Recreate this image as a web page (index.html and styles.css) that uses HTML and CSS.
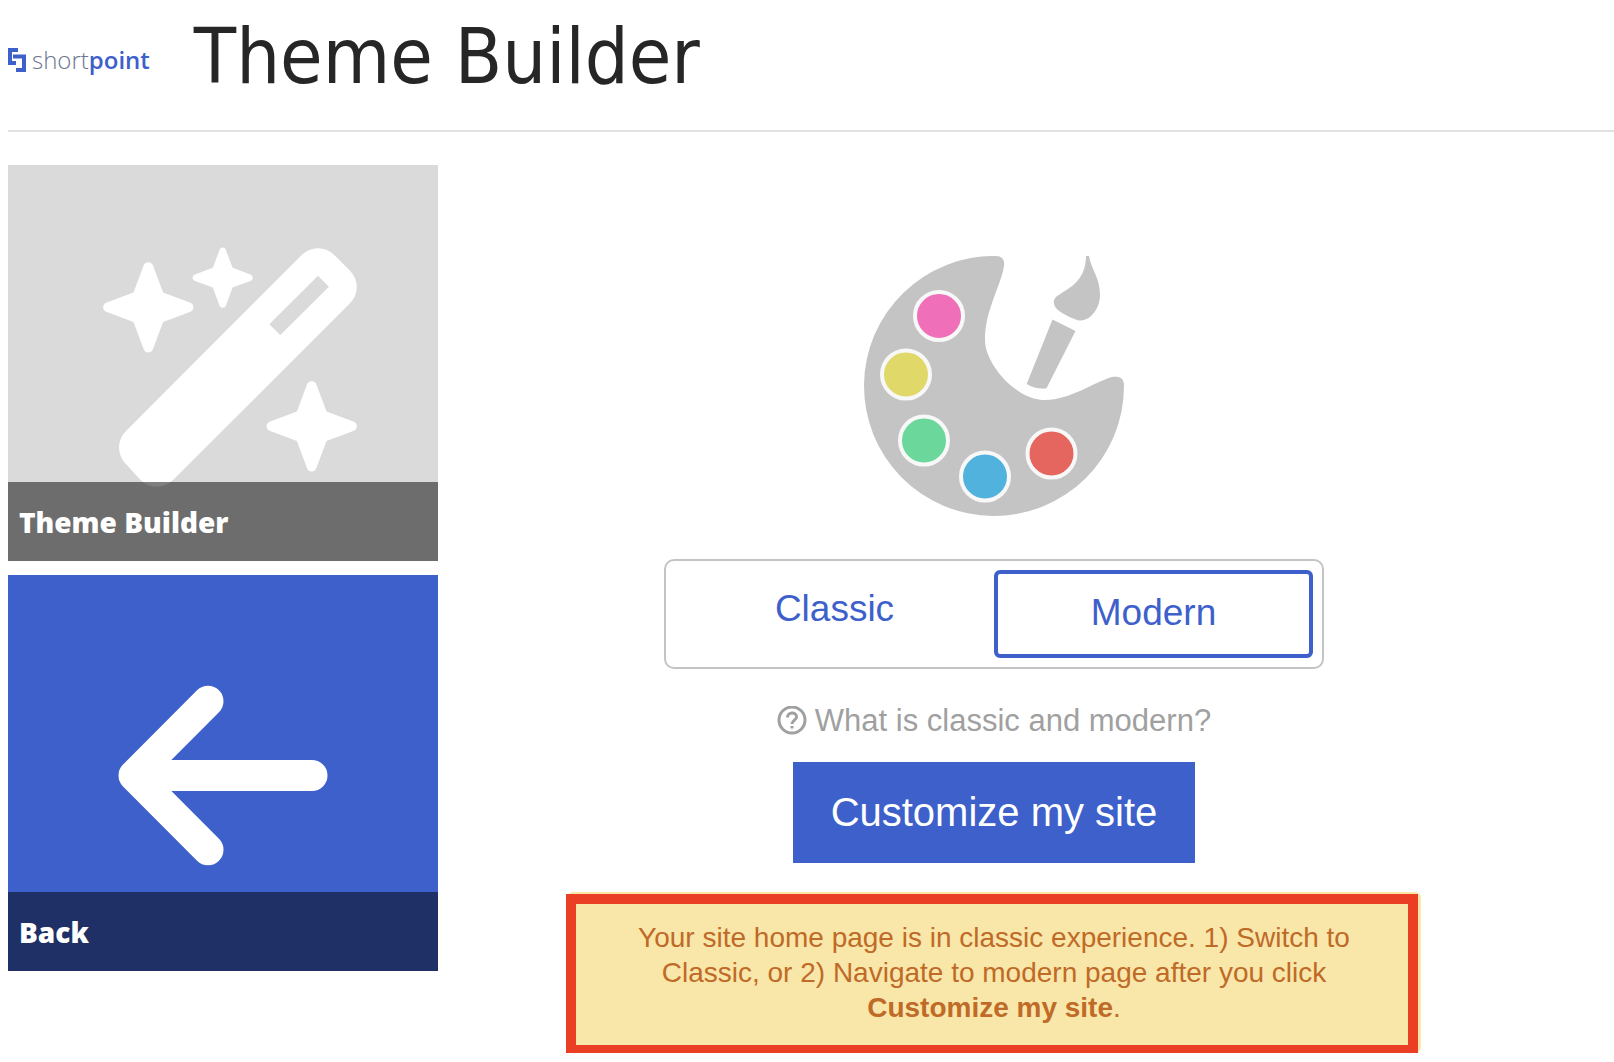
FILE: index.html
```html
<!DOCTYPE html>
<html lang="en">
<head>
  <meta charset="UTF-8" />
  <meta name="viewport" content="width=device-width, initial-scale=1.0"/>
  <title>Theme Builder</title>
  <link rel="stylesheet" href="styles.css">
</head>
<body>
  <header class="header">
    <a href="#" class="logo">
      <svg class="logo-mark" viewBox="0 0 18 24" aria-hidden="true">
        <path d="M10 2H2V15H8M5 8.500H16V22H8" />
      </svg>
      <span class="logo-text">short<b>point</b></span>
    </a>
    <h1>Theme Builder</h1>
  </header>

  <div class="layout">
    <nav class="sidebar">
      <a href="#" class="tile">
        <svg class="tile-icon" viewBox="0 0 430 396" aria-hidden="true">
          <defs>
            <path id="star" d="M-4.800 -41.500A5 5 0 0 1 4.800 -41.500L14.800 -14.800L41.500 -4.800A5 5 0 0 1 41.500 4.800L14.800 14.800L4.800 41.500A5 5 0 0 1 -4.800 41.500L-14.800 14.800L-41.500 4.800A5 5 0 0 1 -41.500 -4.800L-14.800 -14.800Z" />
          </defs>
          <path fill-rule="evenodd" d="M293.700 90A23 23 0 0 1 326.300 90L342 105.700A23 23 0 0 1 342 138.300L165 315A23 23 0 0 1 132.500 315L118 299A23 23 0 0 1 118 266ZM310 110.700L261.300 159.300L272.300 170L321 121.700Z" />
          <use href="#star" transform="translate(140.300 142.300)" />
          <use href="#star" transform="translate(214.700 112.700) scale(.667)" />
          <use href="#star" transform="translate(303.700 261.300)" />
        </svg>
        <span class="tile-title">Theme Builder</span>
      </a>
      <a href="#" class="tile tile-back">
        <svg class="tile-icon" viewBox="0 0 430 396" aria-hidden="true">
          <path class="arrow" d="M200 126.300L126 200.500L200 274.700M126 200.500H304" />
        </svg>
        <span class="tile-title">Back</span>
      </a>
    </nav>

    <main class="content">
      <svg class="palette" viewBox="0 0 260 260" aria-hidden="true">
        <path d="M132 0C138 0 141 4 140 10C137 30 121 54 121 84C121 108 152 144 181 144C206 144 230 126 248 121C256 120 260 122 260 130A130 130 0 1 1 132 0Z" />
        <path d="M222 0H225C227 13 236 22 236 39C236 52 227 64 217 64.500C212 65 196 57 192 52C189 48 189 44 192 41C200 34 222 28 222 0Z" />
        <path d="M188.500 63.500L211.500 75L182.500 132.300C175 133 169 132 162.700 128Z" />
        <circle class="pink" cx="75" cy="60" r="24" />
        <circle class="yellow" cx="42" cy="118.500" r="24" />
        <circle class="green" cx="60" cy="184.500" r="24" />
        <circle class="blue" cx="121" cy="220.500" r="24" />
        <circle class="red" cx="187.500" cy="197.500" r="24" />
      </svg>

      <div class="switch">
        <button type="button" class="switch-btn">Classic</button>
        <button type="button" class="switch-btn active">Modern</button>
      </div>

      <a href="#" class="help">
        <svg class="help-icon" viewBox="0 0 30 30" aria-hidden="true">
          <circle cx="15" cy="14" r="13" />
          <path d="M10.500 11.500C10.500 5.500 19.500 5.500 19.500 11C19.500 14 15 14.500 15 18M15 20V22.500" />
        </svg>
        What is classic and modern?
      </a>

      <button type="button" class="btn">Customize my site</button>

      <div class="alert">
        Your site home page is in classic experience. 1) Switch to Classic, or 2) Navigate to modern page after you click <strong>Customize my site</strong>.
      </div>
    </main>
  </div>
</body>
</html>
```

FILE: styles.css
```css
:root {
  --primary: #3d60cb;
  --gray: #c4c4c4;
  --text: #262626;
  --muted: #a0a0a0;
  --warn-bg: #f8e7a9;
  --warn-text: #c06a28;
  --highlight: #eb3f25;
  --font: "Liberation Sans", Arial, sans-serif;
}

* {
  box-sizing: border-box;
}

body {
  margin: 0;
  padding-left: 8px;
  font-family: var(--font);
  color: var(--text);
  background-color: #fff;
}

a {
  text-decoration: none;
}

button {
  font-family: inherit;
  cursor: pointer;
}

.header {
  display: flex;
  align-items: center;
  gap: 44px;
  padding: 10px 0 26px;
  border-bottom: 2px solid #e1e1e1;
}

.header h1 {
  margin: 0;
  font-family: "DejaVu Sans Condensed", Tahoma, sans-serif;
  font-size: 77px;
  font-weight: 400;
  line-height: 94px;
}

.logo {
  display: flex;
  align-items: center;
  gap: 6px;
  padding-top: 6px;
  color: #6c7590;
}

.logo-mark {
  width: 18px;
  height: 24px;
  fill: none;
  stroke: var(--primary);
  stroke-width: 4;
}

.logo-text {
  font-family: "Open Sans", sans-serif;
  font-size: 24px;
  font-weight: 300;
  line-height: 26px;
}

.logo-text b {
  font-weight: 600;
  color: var(--primary);
}

.layout {
  display: flex;
  padding: 33px 64px 0 0;
}

.sidebar {
  display: flex;
  flex-direction: column;
  flex: 0 0 430px;
  gap: 14px;
}

.tile {
  position: relative;
  display: block;
  background-color: #dadada;
}

.tile-back {
  background-color: var(--primary);
}

.tile-icon {
  display: block;
  width: 100%;
  fill: #fff;
}

.arrow {
  fill: none;
  stroke: #fff;
  stroke-width: 31;
  stroke-linecap: round;
  stroke-linejoin: round;
}

/* caption bar over the icon */
.tile-title {
  position: absolute;
  left: 0;
  right: 0;
  bottom: 0;
  padding: 20px 11px 19px;
  font-family: "Open Sans", sans-serif;
  font-size: 28px;
  font-weight: 800;
  line-height: 40px;
  color: #fff;
  background-color: rgba(0, 0, 0, 0.5);
}

.content {
  display: flex;
  flex: 1;
  flex-direction: column;
  align-items: center;
  padding-top: 91px;
}

.palette {
  width: 260px;
  height: 260px;
  fill: var(--gray);
}

.palette circle {
  stroke: #f8f8f8;
  stroke-width: 4;
}

.palette .pink { fill: #ef6fb8; }
.palette .yellow { fill: #e0d868; }
.palette .green { fill: #6bd79b; }
.palette .blue { fill: #51b2de; }
.palette .red { fill: #e5655f; }

.switch {
  display: flex;
  align-items: flex-start;
  width: 100%;
  max-width: 660px;
  margin-top: 43px;
  padding: 9px;
  border: 2px solid var(--gray);
  border-radius: 10px;
}

.switch-btn {
  width: 50%;
  padding: 17px 0 20px;
  border: none;
  border-radius: 6px;
  font-size: 37px;
  line-height: 43px;
  color: var(--primary);
  background: transparent;
}

.switch-btn.active {
  border: 4px solid var(--primary);
}

.help {
  display: flex;
  align-items: center;
  gap: 8px;
  margin-top: 34px;
  font-size: 31px;
  line-height: 35px;
  color: var(--muted);
}

.help-icon {
  width: 30px;
  height: 30px;
  fill: none;
  stroke: var(--muted);
  stroke-width: 3;
}

.btn {
  margin-top: 24px;
  padding: 27px 38px 28px;
  border: none;
  font-size: 40px;
  line-height: 46px;
  color: #fff;
  background-color: var(--primary);
}

.alert {
  position: relative;
  width: 100%;
  max-width: 854px;
  margin-top: 29px;
  padding: 28px 52px;
  border-radius: 6px;
  font-size: 28px;
  line-height: 35px;
  text-align: center;
  color: var(--warn-text);
  background-color: var(--warn-bg);
}

/* frame drawn slightly off the box */
.alert::after {
  content: "";
  position: absolute;
  top: 2px;
  right: 3px;
  bottom: -2px;
  left: -1px;
  border: 10px solid var(--highlight);
}
```
